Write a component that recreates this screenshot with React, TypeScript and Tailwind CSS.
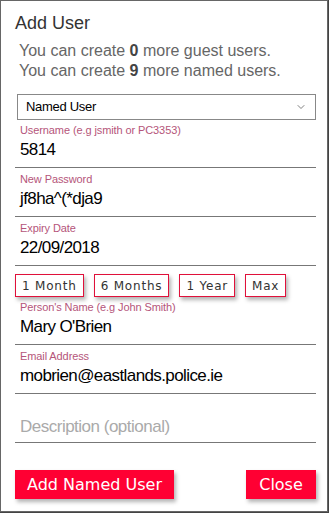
import { ChevronDown } from "lucide-react";

const fields = [
  { label: "Username (e.g jsmith or PC3353)", value: "5814" },
  { label: "New Password", value: "jf8ha^(*dja9" },
  { label: "Expiry Date", value: "22/09/2018" },
];

const fields2 = [
  { label: "Person's Name (e.g John Smith)", value: "Mary O'Brien" },
  { label: "Email Address", value: "mobrien@eastlands.police.ie" },
];

function Field({ label, value }: { label: string; value: string }) {
  return (
    <div className="border-b border-[#777] pl-[5px] pb-[6px]">
      <p className="text-[11px] leading-[14px] text-[#b5557a] tracking-[-0.1px]">{label}</p>
      <p className="mt-[2px] text-[17px] leading-[22px] text-black tracking-[-0.6px]">{value}</p>
    </div>
  );
}

export default function App() {
  const durations = ["1 Month", "6 Months", "1 Year", "Max"];

  return (
    <div className="w-[329px] h-[513px] bg-[#444] font-['Liberation_Sans',sans-serif]">
      <div className="w-[328px] h-[512px] bg-white border border-[#666] pl-[14px] pr-[11px] pt-[10px] flex flex-col">
        <h1 className="text-[18px] leading-[24px] text-[#333]">Add User</h1>
        <div className="mt-[6px] pl-[4px] text-[16px] leading-[20px] text-[#666]">
          <p>
            You can create <b className="text-[#444]">0</b> more guest users.
          </p>
          <p>
            You can create <b className="text-[#444]">9</b> more named users.
          </p>
        </div>

        <div className="mt-[13px] ml-[2px] h-[26px] border border-[#888] flex items-center justify-between px-[8px]">
          <span className="text-[13px] text-black tracking-[-0.3px]">Named User</span>
          <ChevronDown className="h-[12px] w-[12px] text-[#555]" strokeWidth={1.5} />
        </div>

        <div className="mt-[3px] flex flex-col gap-[4px]">
          {fields.map((f) => (
            <Field key={f.label} {...f} />
          ))}
        </div>

        <div className="mt-[8px] flex gap-[10px] font-['DejaVu_Sans',sans-serif]">
          {durations.map((d) => (
            <button
              key={d}
              className="h-[23px] px-[6px] border border-[#e0103a] bg-white text-[12px] tracking-[0.8px] text-[#333] shadow-[2px_3px_4px_rgba(0,0,0,0.3)]"
            >
              {d}
            </button>
          ))}
        </div>

        <div className="mt-[3px] flex flex-col gap-[4px]">
          {fields2.map((f) => (
            <Field key={f.label} {...f} />
          ))}
        </div>

        <div className="mt-[22px] border-b border-[#777] pl-[5px] pb-[4px]">
          <p className="text-[17px] leading-[22px] text-[#aaa] tracking-[-0.5px]">Description (optional)</p>
        </div>

        <div className="mt-[27px] flex justify-between font-['DejaVu_Sans',sans-serif]">
          <button className="h-[29px] w-[159px] bg-[#ff0033] text-white text-[16px] shadow-[2px_3px_4px_rgba(0,0,0,0.3)]">
            Add Named User
          </button>
          <button className="h-[29px] w-[70px] bg-[#ff0033] text-white text-[16px] shadow-[2px_3px_4px_rgba(0,0,0,0.3)]">
            Close
          </button>
        </div>
      </div>
    </div>
  );
}
